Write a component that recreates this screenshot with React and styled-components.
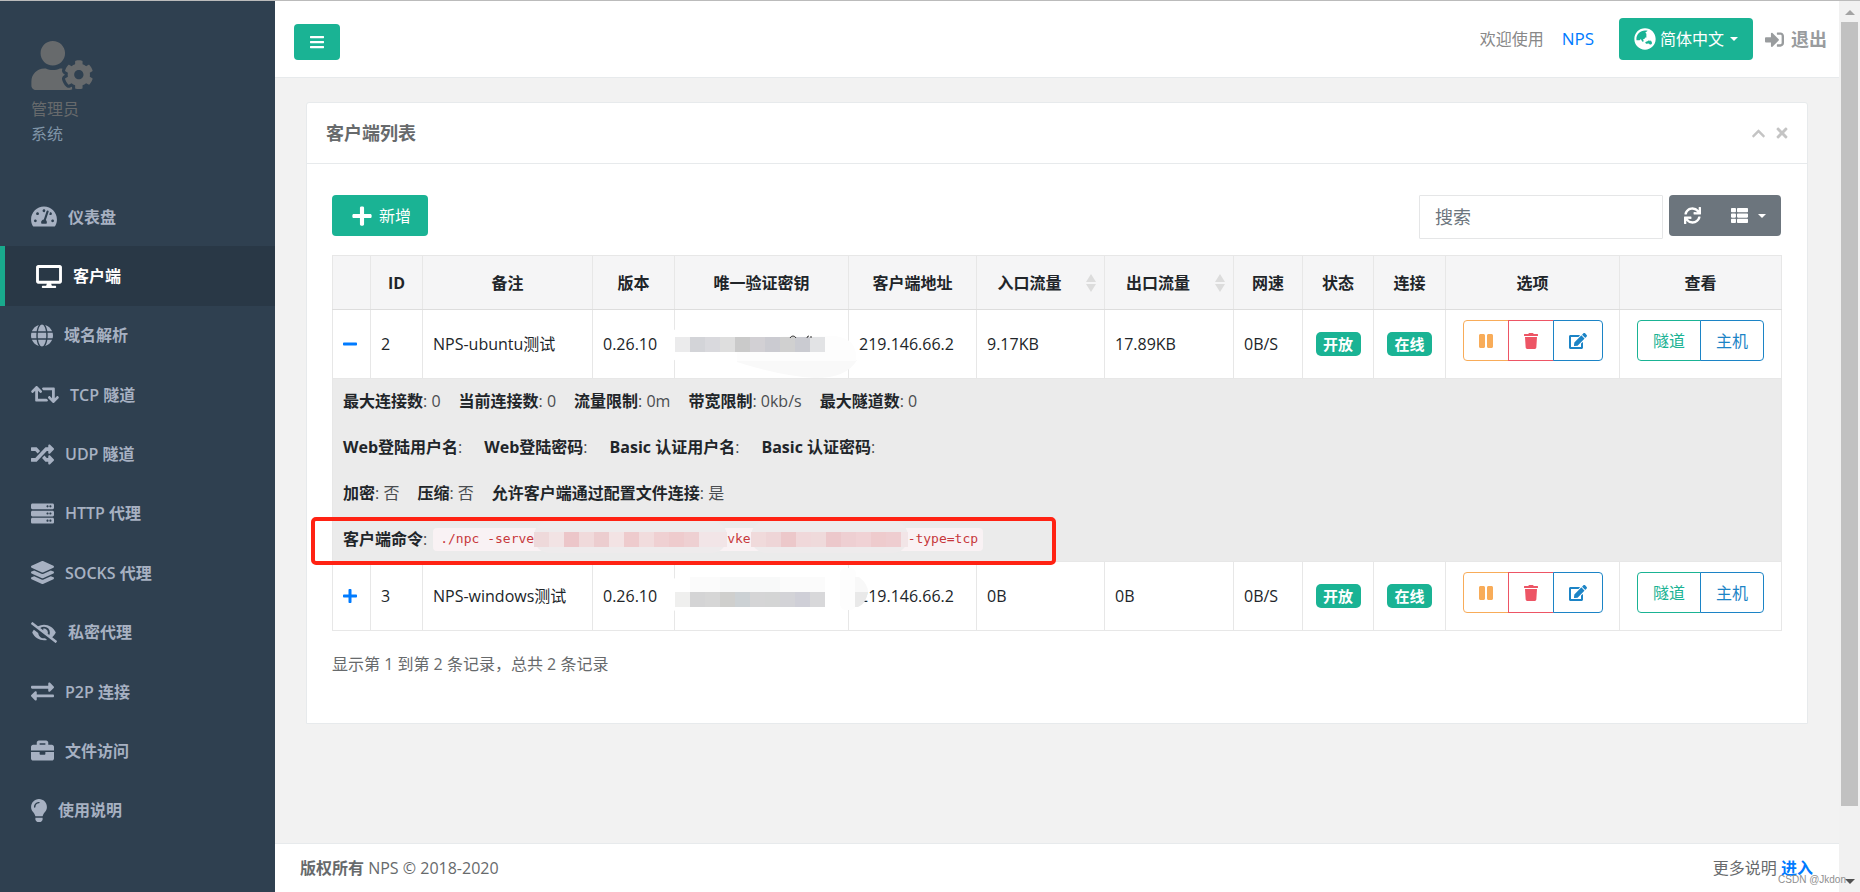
import { useState } from "react";
import { createGlobalStyle, styled } from "styled-components";
import {
  FaUserCog,
  FaTachometerAlt,
  FaDesktop,
  FaGlobe,
  FaGlobeAsia,
  FaRetweet,
  FaRandom,
  FaServer,
  FaLayerGroup,
  FaEyeSlash,
  FaExchangeAlt,
  FaBriefcase,
  FaLightbulb,
  FaBars,
  FaSignInAlt,
  FaChevronUp,
  FaTimes,
  FaPlus,
  FaMinus,
  FaSync,
  FaThList,
  FaPause,
  FaTrash,
  FaEdit,
} from "react-icons/fa";

const GlobalStyle = createGlobalStyle`
  * {
    box-sizing: border-box;
  }

  body {
    margin: 0;
    background-color: #f2f2f2;
    color: #676a6c;
    font-family: "Open Sans", "Noto Sans CJK SC", sans-serif;
    font-size: 16px;
    line-height: 24px;
  }

  button,
  input,
  select {
    font: inherit;
    color: inherit;
  }

  a {
    text-decoration: none;
  }

  p {
    margin: 0;
  }

  svg {
    display: block;
    flex: none;
  }
`;

const Page = styled.div`
  position: relative;
  display: flex;
  min-height: 100vh;
  border-top: 1px solid #bbbbbb;
`;

const Sidebar = styled.nav`
  flex: none;
  width: 275px;
  background-color: #2f4050;
`;

const Profile = styled.div`
  padding: 40px 31px 0;
  height: 186px;
  color: #676a6c;
  line-height: 25px;

  svg {
    width: 62px;
    height: 49px;
    margin-bottom: 7px;
  }
`;

const ProfileRole = styled.div`
  color: #8095a8;
`;

const Menu = styled.ul`
  display: grid;
  grid-auto-rows: 1fr;
  height: 653px;
  margin: 0;
  padding: 0;
  list-style: none;
`;

const MenuLink = styled.a`
  display: flex;
  align-items: center;
  gap: 11px;
  height: 100%;
  padding-left: 31px;
  border-left: ${({ $active }) => ($active ? "5px solid #19aa8d" : "none")};
  background-color: ${({ $active }) => ($active ? "#293846" : "transparent")};
  color: ${({ $active }) => ($active ? "#ffffff" : "#a7b1c2")};
  font-weight: 600;

  svg {
    width: ${({ $iconWidth }) => $iconWidth}px;
    height: 23px;
  }
`;

const Main = styled.main`
  display: flex;
  flex: 1;
  flex-direction: column;
  min-width: 0;
`;

const Header = styled.header`
  display: flex;
  align-items: center;
  height: 77px;
  padding: 0 12px 0 19px;
  border-bottom: 1px solid #e7eaec;
  background-color: #ffffff;
`;

const MenuButton = styled.button`
  display: flex;
  align-items: center;
  justify-content: center;
  width: 46px;
  height: 36px;
  margin-top: 5px;
  border: none;
  border-radius: 4px;
  background-color: #1ab394;
  color: #ffffff;
`;

const HeaderRight = styled.div`
  display: flex;
  align-items: center;
  margin-left: auto;
  color: #888888;
`;

const BrandLink = styled.a`
  margin: 0 25px 0 18px;
  color: #007bff;
  font-size: 17px;
`;

const Language = styled.label`
  display: flex;
  align-items: center;
  height: 42px;
  padding: 0 15px;
  border-radius: 4px;
  background-color: #1ab394;
  color: #ffffff;

  select {
    margin: 0 5px 0 4px;
    padding: 0;
    border: none;
    appearance: none;
    background: none;
  }
`;

const Caret = styled.span`
  border: 4px solid transparent;
  border-top-color: #ffffff;
  border-bottom: none;
`;

const LogoutLink = styled.a`
  display: flex;
  align-items: center;
  gap: 7px;
  margin-left: 12px;
  color: #999c9e;
  font-size: 18px;
  font-weight: 600;
`;

const Content = styled.div`
  flex: 1;
  padding: 24px 31px 40px;
`;

const Card = styled.section`
  border: 1px solid #e7eaec;
  border-radius: 3px 3px 0 0;
  background-color: #ffffff;
`;

const CardTitle = styled.div`
  display: flex;
  align-items: center;
  justify-content: space-between;
  height: 61px;
  padding: 0 17px 0 19px;
  border-bottom: 1px solid #e7eaec;

  h5 {
    margin: 0;
    font-size: 18px;
    font-weight: 600;
  }
`;

const CardTools = styled.div`
  display: flex;
  gap: 8px;
  color: #c4c4c4;
`;

const ToolButton = styled.button`
  padding: 0;
  border: none;
  background: none;
`;

const CardBody = styled.div`
  padding: 31px 26px 47px 25px;
`;

const Toolbar = styled.div`
  display: flex;
  align-items: flex-start;
  justify-content: space-between;
  margin-bottom: 16px;
`;

const AddButton = styled.button`
  display: flex;
  align-items: center;
  gap: 6px;
  height: 41px;
  padding: 0 17px 0 19px;
  border: none;
  border-radius: 4px;
  background-color: #1ab394;
  color: #ffffff;
`;

const ToolbarRight = styled.div`
  display: flex;
  gap: 6px;
`;

const SearchInput = styled.input`
  width: 244px;
  height: 44px;
  padding: 0 15px;
  border: 1px solid #e5e6e7;
  border-radius: 1px;
  background-color: #ffffff;
  font-size: 18px;

  &::placeholder {
    color: #6c757d;
    opacity: 1;
  }
`;

const DarkGroup = styled.div`
  display: flex;
  height: 41px;
  overflow: hidden;
  border-radius: 4px;
`;

const DarkButton = styled.button`
  display: flex;
  align-items: center;
  gap: 10px;
  padding: 0 15px;
  border: none;
  background-color: #6c757d;
  color: #ffffff;
`;

const Table = styled.table`
  width: 100%;
  border-collapse: collapse;
  table-layout: fixed;
  color: #212529;
`;

const HeadCell = styled.th`
  height: 54px;
  padding: 0 8px;
  border: 1px solid #e7e7e7;
  border-bottom-color: #dddddd;
  background-color: #f5f5f6;
  font-weight: 700;
`;

const SortButton = styled.button`
  display: flex;
  align-items: center;
  gap: 12px;
  width: 100%;
  padding: 0;
  border: none;
  background: none;

  span {
    flex: 1;
  }
`;

const Cell = styled.td`
  position: relative;
  height: 69px;
  padding: 0 ${({ $center }) => ($center ? "0" : "10px")};
  border: 1px solid #e7e7e7;
  white-space: nowrap;
`;

const ActionCell = styled.td`
  height: 69px;
  padding: 10px 0 0;
  border: 1px solid #e7e7e7;
  vertical-align: top;
`;

const ExpandButton = styled.button`
  display: block;
  padding: 0;
  border: none;
  background: none;
  color: #007bff;

  svg {
    width: 14px;
  }
`;

const Badge = styled.span`
  display: block;
  width: 45px;
  margin: 0 auto;
  border-radius: 5px;
  background-color: #1ab394;
  color: #ffffff;
  font-size: 15px;
  font-weight: 600;
  text-align: center;
`;

const ButtonGroup = styled.div`
  display: flex;
  justify-content: center;
`;

const OutlineButton = styled.button`
  display: flex;
  align-items: center;
  height: 41px;
  padding: 0 15px;
  border: 1px solid currentColor;
  background-color: #ffffff;
  color: ${({ $color }) => $color};

  svg {
    width: ${({ $iconWidth }) => $iconWidth}px;
  }

  &:first-child {
    border-radius: 4px 0 0 4px;
  }

  &:last-child {
    border-radius: 0 4px 4px 0;
  }

  & + & {
    margin-left: -1px;
  }
`;

const DetailCell = styled.td`
  padding: 10px;
  border: 1px solid #e7e7e7;
  background-color: #ebebeb;
`;

const DetailList = styled.div`
  display: flex;
  flex-direction: column;
  gap: 22px;
`;

const DetailLine = styled.p`
  position: relative;
  display: flex;
  align-items: center;
  gap: ${({ $wide }) => ($wide ? "22px" : "18px")};
  height: 24px;
  color: #4a4d50;

  b {
    color: #212529;
    font-weight: 700;
  }
`;

const Command = styled.code`
  display: flex;
  align-items: center;
  height: 23px;
  padding: 0 5px 0 7px;
  margin-left: -12px;
  border-radius: 4px;
  background-color: #f9f2f4;
  color: #c7383c;
  font-family: "DejaVu Sans Mono", monospace;
  font-size: 13px;
`;

const Highlight = styled.span`
  position: absolute;
  top: -10px;
  left: -32px;
  width: 745px;
  height: 48px;
  border: 4px solid #ff2213;
  border-radius: 5px;
`;

const KeyMask = styled.svg`
  position: absolute;
  top: 0;
  left: -10px;
  z-index: 1;
`;

const Summary = styled.p`
  margin-top: 21px;
`;

const Footer = styled.footer`
  display: flex;
  justify-content: space-between;
  padding: 12px 26px 12px 25px;
  border-top: 1px solid #e7eaec;
  background-color: #ffffff;

  b {
    font-weight: 600;
  }

  a {
    color: #007bff;
    font-weight: 600;
  }
`;

const ScrollTrack = styled.div`
  display: flex;
  flex: none;
  flex-direction: column;
  justify-content: space-between;
  align-items: center;
  width: 21px;
  padding: 9px 0 8px;
  background-color: #f1f1f1;
`;

const ScrollThumb = styled.div`
  flex: 1;
  width: 17px;
  margin: 7px 0 73px;
  background-color: #c1c1c1;
`;

const Watermark = styled.span`
  position: absolute;
  right: 14px;
  bottom: 4px;
  color: #8f8f8f;
  font-family: "Liberation Sans", sans-serif;
  font-size: 10px;
  line-height: 16px;
`;

const menuItems = [
  { icon: FaTachometerAlt, iconWidth: 26, label: "仪表盘" },
  { icon: FaDesktop, iconWidth: 26, label: "客户端" },
  { icon: FaGlobe, iconWidth: 22, label: "域名解析" },
  { icon: FaRetweet, iconWidth: 28, label: "TCP 隧道" },
  { icon: FaRandom, iconWidth: 23, label: "UDP 隧道" },
  { icon: FaServer, iconWidth: 23, label: "HTTP 代理" },
  { icon: FaLayerGroup, iconWidth: 23, label: "SOCKS 代理" },
  { icon: FaEyeSlash, iconWidth: 26, label: "私密代理" },
  { icon: FaExchangeAlt, iconWidth: 23, label: "P2P 连接" },
  { icon: FaBriefcase, iconWidth: 23, label: "文件访问" },
  { icon: FaLightbulb, iconWidth: 16, label: "使用说明" },
];

const columns = [
  { title: "", width: 38 },
  { title: "ID", width: 52 },
  { title: "备注", width: 170 },
  { title: "版本", width: 82 },
  { title: "唯一验证密钥", width: 174 },
  { title: "客户端地址", width: 128 },
  { title: "入口流量", width: 128, sortable: true },
  { title: "出口流量", width: 129, sortable: true },
  { title: "网速", width: 69 },
  { title: "状态", width: 71 },
  { title: "连接", width: 72 },
  { title: "选项", width: 174 },
  { title: "查看", width: 162 },
];

const clients = [
  { id: 2, remark: "NPS-ubuntu测试", version: "0.26.10", addr: "219.146.66.2", inFlow: "9.17KB", outFlow: "17.89KB", rate: "0B/S" },
  { id: 3, remark: "NPS-windows测试", version: "0.26.10", addr: "219.146.66.2", inFlow: "0B", outFlow: "0B", rate: "0B/S" },
];

const details = [
  {
    items: [
      ["最大连接数", "0"],
      ["当前连接数", "0"],
      ["流量限制", "0m"],
      ["带宽限制", "0kb/s"],
      ["最大隧道数", "0"],
    ],
  },
  {
    wide: true,
    items: [
      ["Web登陆用户名", ""],
      ["Web登陆密码", ""],
      ["Basic 认证用户名", ""],
      ["Basic 认证密码", ""],
    ],
  },
  {
    items: [
      ["加密", "否"],
      ["压缩", "否"],
      ["允许客户端通过配置文件连接", "是"],
    ],
  },
];

const greys = {
  2: ["#ebebec", "#d3d4d8", "#d9d9dd", "#dedede", "#cacaca", "#d2d0d4", "#cbcbd1", "#d0d0d0", "#cacbd1", "#e2e3e5"],
  3: ["#efefee", "#d4d4d5", "#d6d6d6", "#cfcfcd", "#ccd1d4", "#d5d5d6", "#d4d5d5", "#d3d3d7", "#cfcfd7", "#d8d8da"],
};

const pinks = {
  server: ["#eed9da", "#f2e3e4", "#ecc6c9", "#f0dadb", "#eccdcf", "#f3e3e4", "#eecbcd", "#f1dcdd", "#efd0d2", "#eecbcd", "#eed0d2"],
  vkey: ["#f0dadb", "#eed5d7", "#ecc8ca", "#f0d8da", "#efdadb", "#ecc8cb", "#eecfd2", "#f0d2d5", "#eecbcd", "#eecdd0"],
};

const Blocks = ({ colors, y }) =>
  colors.map((color, i) => (
    <rect key={i} x={i * 15} y={y} width="15" height="15" fill={color} />
  ));

const MaskedKey = ({ id }) => (
  <KeyMask width="206" height="68" viewBox="-10 0 206 68">
    {id === 2 ? (
      <>
        <rect x="-8" y="17" width="176" height="36" rx="17" fill="#ffffff" />
        <path d="M62 50H182Q172 68 140 68Q105 66 62 52Z" fill="#f9f9f9" />
        <path d="M110 26H160Q181 29 181 46V51H62V34Z" fill="#fdfdfd" />
        <Blocks colors={greys[2]} y={27} />
        <path d="M115 28q1-2 3-2t3 2M132 28q0-2 2-2M136 26v2" stroke="#333333" fill="none" />
      </>
    ) : (
      <>
        <rect x="-8" y="13" width="180" height="39" rx="18" fill="#ffffff" />
        <rect x="165" y="6" width="16" height="42" rx="6" fill="#fdfdfd" />
        <rect x="15" y="15" width="135" height="15" fill="#fbfbfb" />
        <rect x="45" y="15" width="60" height="15" fill="#f8f9f9" />
        <path d="M180 15h4q9 7 9 15h-13Z" fill="#f8f8f8" />
        <path d="M180 30h13q-2 12-10 15h-3Z" fill="#e9e9e9" />
        <Blocks colors={greys[3]} y={30} />
      </>
    )}
  </KeyMask>
);

const CommandMask = ({ width, colors }) => (
  <svg width={width} height="36" viewBox={`0 0 ${width} 36`}>
    <rect width={width} height="32" rx="15" fill="#eeebec" />
    <rect y="11" width={width} height="15" fill="#f2e5e7" />
    <Blocks colors={colors} y={11} />
  </svg>
);

const SortIcon = () => (
  <svg width="10" height="18" viewBox="0 0 10 18" fill="#dcdcdc">
    <path d="M5 0l5 8H0zM0 10h10l-5 8z" />
  </svg>
);

const ClientRow = ({ client, open, onToggle }) => (
  <tr>
    <Cell>
      <ExpandButton aria-label="详情" aria-expanded={open} onClick={onToggle}>
        {open ? <FaMinus /> : <FaPlus />}
      </ExpandButton>
    </Cell>
    <Cell>{client.id}</Cell>
    <Cell>{client.remark}</Cell>
    <Cell>{client.version}</Cell>
    <Cell>
      <MaskedKey id={client.id} />
    </Cell>
    <Cell>{client.addr}</Cell>
    <Cell>{client.inFlow}</Cell>
    <Cell>{client.outFlow}</Cell>
    <Cell>{client.rate}</Cell>
    <Cell $center>
      <Badge>开放</Badge>
    </Cell>
    <Cell $center>
      <Badge>在线</Badge>
    </Cell>
    <ActionCell>
      <ButtonGroup>
        <OutlineButton $color="#f8ac59" $iconWidth={14} aria-label="暂停"><FaPause /></OutlineButton>
        <OutlineButton $color="#ed5565" $iconWidth={14} aria-label="删除"><FaTrash /></OutlineButton>
        <OutlineButton $color="#1c84c6" $iconWidth={18} aria-label="编辑"><FaEdit /></OutlineButton>
      </ButtonGroup>
    </ActionCell>
    <ActionCell>
      <ButtonGroup>
        <OutlineButton $color="#1ab394">隧道</OutlineButton>
        <OutlineButton $color="#1c84c6">主机</OutlineButton>
      </ButtonGroup>
    </ActionCell>
  </tr>
);

const ClientDetail = () => (
  <tr>
    <DetailCell colSpan={columns.length}>
      <DetailList>
        {details.map((line, i) => (
          <DetailLine key={i} $wide={line.wide}>
            {line.items.map(([name, value]) => (
              <span key={name}>
                <b>{name}</b>: {value}
              </span>
            ))}
          </DetailLine>
        ))}
        <DetailLine>
          <span>
            <b>客户端命令</b>:
          </span>
          <Command>
            ./npc -serve
            <CommandMask width={193} colors={pinks.server} />
            vke
            <CommandMask width={157} colors={pinks.vkey} />
            -type=tcp
          </Command>
          <Highlight />
        </DetailLine>
      </DetailList>
    </DetailCell>
  </tr>
);

export default function App() {
  const [openId, setOpenId] = useState(2);

  return (
    <Page>
      <GlobalStyle />
      <Sidebar>
        <Profile>
          <FaUserCog />
          <div>管理员</div>
          <ProfileRole>系统</ProfileRole>
        </Profile>
        <Menu>
          {menuItems.map(({ icon: Icon, iconWidth, label }) => (
            <li key={label}>
              <MenuLink href="#" $active={label === "客户端"} $iconWidth={iconWidth}>
                <Icon />
                {label}
              </MenuLink>
            </li>
          ))}
        </Menu>
      </Sidebar>

      <Main>
        <Header>
          <MenuButton aria-label="菜单"><FaBars /></MenuButton>
          <HeaderRight>
            欢迎使用
            <BrandLink href="#">NPS</BrandLink>
            <Language>
              <FaGlobeAsia size={22} />
              <select aria-label="语言">
                <option>简体中文</option>
              </select>
              <Caret />
            </Language>
            <LogoutLink href="#">
              <FaSignInAlt size={19} />
              退出
            </LogoutLink>
          </HeaderRight>
        </Header>

        <Content>
          <Card>
            <CardTitle>
              <h5>客户端列表</h5>
              <CardTools>
                <ToolButton aria-label="折叠"><FaChevronUp size={15} /></ToolButton>
                <ToolButton aria-label="关闭"><FaTimes /></ToolButton>
              </CardTools>
            </CardTitle>
            <CardBody>
              <Toolbar>
                <AddButton>
                  <FaPlus size={22} />
                  新增
                </AddButton>
                <ToolbarRight>
                  <SearchInput type="text" placeholder="搜索" aria-label="搜索" />
                  <DarkGroup>
                    <DarkButton aria-label="刷新"><FaSync size={17} /></DarkButton>
                    <DarkButton aria-label="列">
                      <FaThList size={17} />
                      <Caret />
                    </DarkButton>
                  </DarkGroup>
                </ToolbarRight>
              </Toolbar>

              <Table>
                <colgroup>
                  {columns.map(({ title, width }) => (
                    <col key={title} width={width} />
                  ))}
                </colgroup>
                <thead>
                  <tr>
                    {columns.map(({ title, sortable }) => (
                      <HeadCell key={title}>
                        {sortable ? (
                          <SortButton>
                            <span>{title}</span>
                            <SortIcon />
                          </SortButton>
                        ) : (
                          title
                        )}
                      </HeadCell>
                    ))}
                  </tr>
                </thead>
                {clients.map((client) => (
                  <tbody key={client.id}>
                    <ClientRow
                      client={client}
                      open={openId === client.id}
                      onToggle={() => setOpenId(openId === client.id ? null : client.id)}
                    />
                    {openId === client.id && <ClientDetail />}
                  </tbody>
                ))}
              </Table>
              <Summary>显示第 1 到第 2 条记录，总共 2 条记录</Summary>
            </CardBody>
          </Card>
        </Content>

        <Footer>
          <div>
            <b>版权所有</b> NPS © 2018-2020
          </div>
          <div>
            更多说明 <a href="#">进入</a>
          </div>
        </Footer>
      </Main>

      <ScrollTrack>
        <svg width="10" height="5" viewBox="0 0 10 5" fill="#a3a3a3">
          <path d="M5 0l5 5H0z" />
        </svg>
        <ScrollThumb />
        <svg width="10" height="5" viewBox="0 0 10 5" fill="#505050">
          <path d="M0 0h10L5 5z" />
        </svg>
      </ScrollTrack>
      <Watermark>CSDN @Jkdon</Watermark>
    </Page>
  );
}
